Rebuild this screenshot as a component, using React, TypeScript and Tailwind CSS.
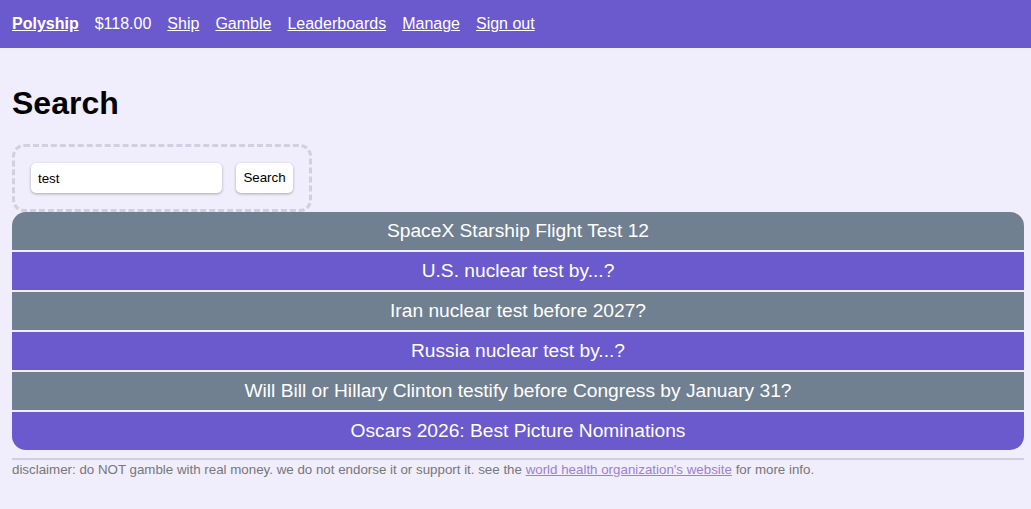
const results = [
  "SpaceX Starship Flight Test 12",
  "U.S. nuclear test by...?",
  "Iran nuclear test before 2027?",
  "Russia nuclear test by...?",
  "Will Bill or Hillary Clinton testify before Congress by January 31?",
  "Oscars 2026: Best Picture Nominations",
];

export default function App() {
  return (
    <div className="min-h-[509px] bg-[#f0eefc] font-['Liberation_Sans',Arial,sans-serif] text-black">
      <nav className="flex h-12 items-center gap-4 bg-[#6a5acd] px-3 text-base text-white">
        <a href="#" className="font-bold underline">Polyship</a>
        <span>$118.00</span>
        <a href="#" className="underline">Ship</a>
        <a href="#" className="underline">Gamble</a>
        <a href="#" className="underline">Leaderboards</a>
        <a href="#" className="underline">Manage</a>
        <a href="#" className="underline">Sign out</a>
      </nav>

      <main className="pl-3 pr-[7px]">
        <h1 className="mt-[37px] mb-[22px] text-[32px] font-bold leading-[37px]">Search</h1>

        <form className="flex w-[300px] items-center gap-[14px] rounded-[12px] border-[3px] border-dashed border-[#d2cfe0] p-4">
          <input
            defaultValue="test"
            className="h-[30px] w-[191px] rounded-[5px] bg-white px-[7px] text-[13.33px] shadow-[0_1px_3px_rgba(0,0,0,0.3)] outline-none"
          />
          <button
            type="button"
            className="h-[30px] w-[57px] rounded-[5px] bg-white text-[13.33px] shadow-[0_1px_3px_rgba(0,0,0,0.3)]"
          >
            Search
          </button>
        </form>

        <div className="flex flex-col gap-[2px] overflow-hidden rounded-[14px]">
          {results.map((r, i) => (
            <a
              key={r}
              href="#"
              className={
                "flex h-[38px] items-center justify-center text-[19.2px] text-white " +
                (i % 2 === 0 ? "bg-[#708090]" : "bg-[#6a5acd]")
              }
            >
              {r}
            </a>
          ))}
        </div>

        <hr className="mt-2 border-t-2 border-[#d0cee0]" />
        <p className="mt-[2px] text-[13.33px] leading-[15px] text-[#777]">
          disclaimer: do NOT gamble with real money. we do not endorse it or support it. see the{" "}
          <a href="#" className="text-[#9d80d0] underline">world health organization's website</a> for more info.
        </p>
      </main>
    </div>
  );
}
